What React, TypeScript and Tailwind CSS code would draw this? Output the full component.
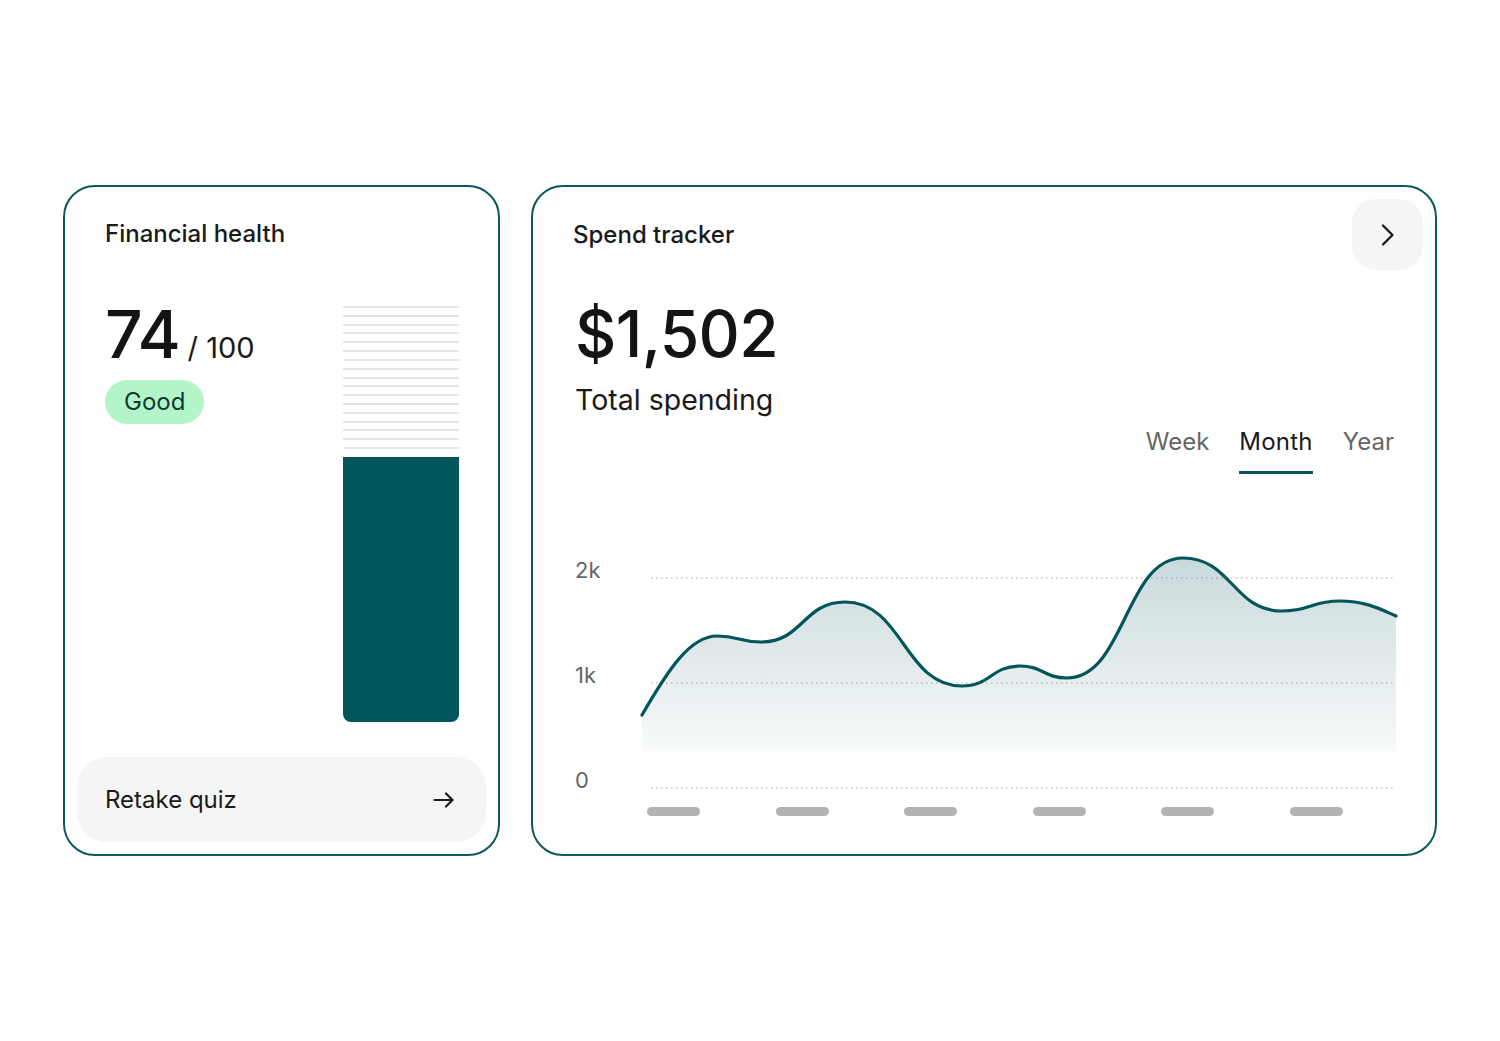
import React from 'react';

const font = { fontFamily: 'Inter, "Noto Sans", sans-serif' };

const stripes = Array.from({ length: 17 }, (_, i) => i);
const ticks = [647, 776, 904, 1033, 1161, 1290];
const gridLines = [
  { y: 578, label: '2k' },
  { y: 683, label: '1k' },
  { y: 788, label: '0' },
];

const linePath =
  'M642,715 C668,670 690,636 717,636 C739,636 739,642 761,642 C803,642 803,602 845,602 C903,602 904,686 962,686 C991,686 991,666 1020,666 C1043,666 1044,678 1067,678 C1125,678 1125,558 1183,558 C1232,558 1233,611 1282,611 C1311,611 1311,601 1340,601 C1366,601 1380,609 1396,616';

const ArrowIcon: React.FC = () => (
  <svg width="22" height="16" viewBox="0 0 22 16" fill="none">
    <path
      d="M1.5 8h18M13 1.5 19.5 8 13 14.5"
      stroke="#1a1a1a"
      strokeWidth="2.2"
      strokeLinecap="round"
      strokeLinejoin="round"
    />
  </svg>
);

const ChevronIcon: React.FC = () => (
  <svg width="16" height="24" viewBox="0 0 16 24" fill="none">
    <path
      d="M3 2.5 12.5 12 3 21.5"
      stroke="#1a1a1a"
      strokeWidth="2.3"
      strokeLinecap="round"
      strokeLinejoin="round"
    />
  </svg>
);

const FinancialHealth: React.FC = () => (
  <div className="flex flex-col w-[437px] h-[671px] rounded-[32px] border-2 border-[#0c5860] bg-white">
    <div className="pt-3">
      <div className="flex items-center h-[70px] pl-[40px]">
        <h3 className="text-[24px] font-medium text-[#1a1a1a]">Financial health</h3>
      </div>
    </div>
    <div className="flex justify-between items-start pl-[40px] pr-[39px]">
      <div className="flex flex-col items-start mt-[32px]">
        <div className="flex items-baseline gap-2 leading-none">
          <span className="text-[66px] font-medium text-[#141414] tracking-[-0.02em] leading-none">
            74
          </span>
          <span className="text-[29px] text-[#1a1a1a]">/ 100</span>
        </div>
        <span className="mt-[13px] h-[44px] px-[19px] rounded-full bg-[#b3f5c9] text-[24px] leading-[44px] text-[#0b3b33]">
          Good
        </span>
      </div>
      <div className="flex flex-col w-[116px] mt-[37px]">
        <div className="flex flex-col justify-between h-[143px]">
          {stripes.map((i) => (
            <div key={i} className="h-[2px] bg-[#e4e4e4]" />
          ))}
        </div>
        <div className="mt-[8px] h-[265px] rounded-b-[8px] bg-[#02565c]" />
      </div>
    </div>
    <button className="mt-auto mx-3 mb-3 h-[85px] rounded-[30px] bg-[#f5f5f5] flex items-center justify-between pl-[28px] pr-[31px]">
      <span className="text-[24px] text-[#1a1a1a]">Retake quiz</span>
      <ArrowIcon />
    </button>
  </div>
);

const SpendChart: React.FC = () => (
  <svg width="902" height="380" viewBox="533 474 902 380" className="block">
    <defs>
      <linearGradient id="spendFill" x1="0" y1="558" x2="0" y2="751" gradientUnits="userSpaceOnUse">
        <stop offset="0" stopColor="#0b5560" stopOpacity="0.22" />
        <stop offset="1" stopColor="#0b5560" stopOpacity="0.03" />
      </linearGradient>
    </defs>
    {gridLines.map((g) => (
      <g key={g.label}>
        <line
          x1="651"
          x2="1395"
          y1={g.y}
          y2={g.y}
          stroke="#c9c9c9"
          strokeWidth="1.6"
          strokeDasharray="1.6 3.4"
        />
        <text
          x="575"
          y={g.y}
          fontSize="22"
          fill="#666666"
          fontFamily='Inter, "Noto Sans", sans-serif'
        >
          {g.label}
        </text>
      </g>
    ))}
    <path d={`${linePath} L1396,751 L642,751 Z`} fill="url(#spendFill)" />
    <path d={linePath} fill="none" stroke="#04555c" strokeWidth="3.2" strokeLinecap="round" />
    {ticks.map((x) => (
      <rect key={x} x={x} y="807" width="53" height="9" rx="4.5" fill="#b3b3b3" />
    ))}
  </svg>
);

const SpendTracker: React.FC = () => (
  <div className="flex flex-col w-[906px] h-[671px] rounded-[32px] border-2 border-[#0c5860] bg-white">
    <div className="flex items-center justify-between pt-3 pl-[40px] pr-3">
      <div className="flex items-center h-[70px]">
        <h3 className="text-[24px] font-medium text-[#1a1a1a]">Spend tracker</h3>
      </div>
      <button className="w-[71px] h-[71px] rounded-[24px] bg-[#f5f5f5] flex items-center justify-center">
        <ChevronIcon />
      </button>
    </div>
    <div className="pl-[42px] mt-[32px] text-[64px] font-medium leading-none text-[#141414] tracking-[-0.01em]">
      $1,502
    </div>
    <div className="pl-[42px] mt-[16px] text-[28.5px] leading-[36px] text-[#1a1a1a]">Total spending</div>
    <div className="flex justify-end gap-[30px] pr-[41px] mt-[8px]">
      <div className="flex flex-col items-center">
        <span className="text-[24px] leading-8 text-[#666666]">Week</span>
      </div>
      <div className="flex flex-col items-stretch">
        <span className="text-[24px] leading-8 text-[#1a1a1a] tracking-[0.01em]">Month</span>
        <div className="mt-[13px] h-[3px] bg-[#04555c]" />
      </div>
      <div className="flex flex-col items-center">
        <span className="text-[24px] leading-8 text-[#666666]">Year</span>
      </div>
    </div>
    <SpendChart />
  </div>
);

const App: React.FC = () => {
  return (
    <div className="flex items-center justify-center gap-[31px] h-screen bg-white" style={font}>
      <FinancialHealth />
      <SpendTracker />
    </div>
  );
};

export default App;
